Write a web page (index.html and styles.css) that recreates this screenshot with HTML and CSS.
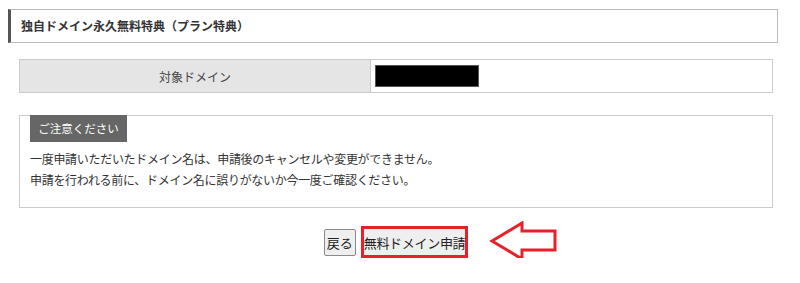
FILE: index.html
```html
<!DOCTYPE html>
<html lang="ja">
<head>
<meta charset="utf-8">
<link rel="stylesheet" href="styles.css">
</head>
<body>
<div class="page">
  <h2 class="heading">独自ドメイン永久無料特典（プラン特典）</h2>
  <table class="info">
    <tr>
      <th>対象ドメイン</th>
      <td><span class="masked"></span></td>
    </tr>
  </table>
  <div class="notice">
    <div class="notice-label">ご注意ください</div>
    <p class="notice-text">一度申請いただいたドメイン名は、申請後のキャンセルや変更ができません。<br>申請を行われる前に、ドメイン名に誤りがないか今一度ご確認ください。</p>
  </div>
  <div class="actions">
    <button class="btn">戻る</button>
    <span class="highlight"><button class="btn btn-apply">無料ドメイン申請</button></span>
    <svg class="arrow" width="70" height="44" viewBox="0 0 70 44">
      <polygon points="3,20 33,2 33,10 66,10 66,29 33,29 33,38" fill="#fff" stroke="#e8202a" stroke-width="3" stroke-linejoin="miter"/>
    </svg>
  </div>
</div>
</body>
</html>
```
FILE: styles.css
```css
html, body {
  margin: 0;
  padding: 0;
  background: #fff;
}
body {
  font-family: "Noto Sans CJK JP", "Liberation Sans", sans-serif;
  color: #333;
  font-size: 12px;
}
.page {
  padding: 9px 0 0 0;
  width: 800px;
}
.heading {
  margin: 0 22px 0 8px;
  height: 32px;
  line-height: 32px;
  border: 1px solid #bbb;
  border-left: 3px solid #555;
  padding: 0 0 0 10px;
  font-size: 12px;
  font-weight: bold;
  color: #333;
}
.info {
  margin: 16px 0 0 19px;
  width: 754px;
  border-collapse: collapse;
  border: 1px solid #ccc;
}
.info th {
  width: 350px;
  height: 32px;
  padding: 0;
  background: #e5e5e5;
  border-right: 1px solid #ccc;
  font-weight: normal;
  color: #444;
  font-size: 12px;
  text-align: center;
}
.info td {
  padding: 0 0 0 4px;
  vertical-align: middle;
  line-height: 0;
}
.masked {
  display: inline-block;
  width: 104px;
  height: 22px;
  background: #000;
  border: 1px solid #555;
  box-sizing: border-box;
}
.notice {
  margin: 22px 0 0 19px;
  width: 754px;
  height: 93px;
  box-sizing: border-box;
  border: 1px solid #ccc;
  border-top: none;
  padding: 0 0 0 10px;
  position: relative;
}
.notice::before {
  content: "";
  position: absolute;
  left: -1px;
  right: -1px;
  top: 0;
  border-top: 1px solid #ccc;
}
.notice-label {
  position: relative;
  display: inline-block;
  width: 97px;
  height: 27px;
  line-height: 27px;
  background: #666;
  color: #fff;
  font-size: 11.5px;
  text-align: center;
}
.notice-text {
  margin: 6px 0 0 0;
  line-height: 21px;
  font-size: 12px;
  color: #333;
  letter-spacing: -0.3px;
}
.actions {
  position: relative;
  width: 792px;
  margin-top: 18px;
  display: flex;
  justify-content: center;
  align-items: center;
  gap: 5px;
}
.btn {
  font-family: "Noto Sans CJK JP", "Liberation Sans", sans-serif;
  font-size: 13px;
  color: #222;
  background: #efefef;
  border: 1px solid #8a8a8a;
  border-radius: 2px;
  height: 27px;
  padding: 0 2px;
  margin: 0;
}
.highlight {
  display: inline-flex;
  border: 3px solid #e8202a;
  background: #efefef;
}
.btn-apply {
  border: none;
  border-radius: 0;
  height: 26px;
  padding: 0;
  letter-spacing: -0.3px;
}
.arrow {
  position: absolute;
  left: 489px;
  top: -5px;
}
```
